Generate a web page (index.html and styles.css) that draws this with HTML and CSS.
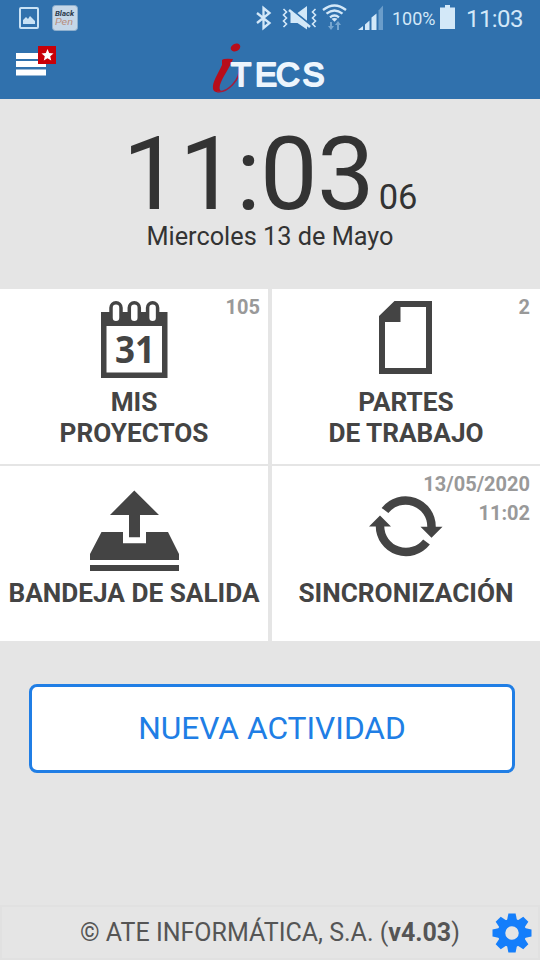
FILE: index.html
```html
<!DOCTYPE html>
<html lang="es">
<head>
<meta charset="utf-8">
<title>iTECS</title>
<link rel="stylesheet" href="styles.css">
</head>
<body>
<header class="header">
  <div class="status">
    <svg class="notices" width="80" height="36" viewBox="0 0 80 36">
      <rect x="20" y="8" width="18" height="20" rx="1" fill="none" stroke="#c9e2f5" stroke-width="2"/>
      <path d="M23 24v-4l3-3 2 2 2-3 2 2 3 3v3z" fill="#c9e2f5"/>
      <rect x="52.500" y="5.500" width="25" height="25" rx="3" fill="#c5d7e8" stroke="#8eafcd"/>
      <text class="pen-top" x="55" y="16" textLength="19" lengthAdjust="spacingAndGlyphs">Black</text>
      <text class="pen-bottom" x="55" y="25" textLength="18" lengthAdjust="spacingAndGlyphs">Pen</text>
    </svg>
    <svg class="signals" width="145" height="36" viewBox="245 0 145 36">
      <path d="M257 13l12.500 10-6 5V8l6 5-12.500 10" fill="none" stroke="#d3e8f8" stroke-width="2.300"/>
      <path d="M290.500 13h7l9.500-7v23.500l-9.500-6.500h-7z" fill="#d3e8f8"/>
      <path d="M289 7.500l21 17" stroke="#3071ad" stroke-width="2.200"/>
      <path d="M289 10l21 17" stroke="#d3e8f8" stroke-width="2.600"/>
      <path d="M283.500 9l3 3-3 3 3 3-3 3 3 3-3 3M315.500 9l-3 3 3 3-3 3 3 3-3 3 3 3" fill="none" stroke="#d3e8f8" stroke-width="1.600"/>
      <path d="M323 10q11.500-9 23 0M326.500 13.700q8-6.500 16 0M330 17.300q4.500-3.500 9 0" fill="none" stroke="#d3e8f8" stroke-width="2.300"/>
      <path d="M331.500 18.800q3-1.500 6 0l-3 3z" fill="#d3e8f8"/>
      <path d="M330 22h2v4h2l-3 4-3-4h2zM337 30h2v-5h2l-3-4-3 4h2z" fill="#76a6d0"/>
      <path d="M358 30l5-4v4zM365 24.500l4.500-4V30H365zM371.500 17.500l5-4V30h-5z" fill="#d3e8f8"/>
      <path d="M378.500 10.500l4.500-5V30h-4.500z" fill="#6b9dca"/>
    </svg>
    <span class="percent">100%</span>
    <svg class="battery" width="15" height="24" viewBox="0 0 15 24"><path d="M5 0h5v2.500h5V24H0V2.500h5z" fill="#d3e8f8"/></svg>
    <span class="status-time">11:03</span>
  </div>
  <div class="brand">
    <svg class="menu" width="40" height="32" viewBox="0 0 40 32">
      <path d="M0 8h30v6H0zM0 16h30v6H0zM0 24.500h30v6H0z" fill="#fff"/>
      <path d="M22 1h18v18H22z" fill="#c90008"/>
      <path d="M31.500 4l1.700 4.100 4.300.3-3.300 2.800 1 4.300-3.700-2.300-3.700 2.300 1-4.300-3.300-2.800 4.300-.3z" fill="#fff"/>
    </svg>
    <svg class="logo" width="120" height="56" viewBox="210 42 120 56">
      <ellipse cx="235.500" cy="47.500" rx="5" ry="3.800" fill="#b70d1b" transform="rotate(-28 235.500 47.500)"/>
      <path d="M222 60q2-2 11-1c-3 8-11 19-13 26-1 4 0 6 2 6-3 2-8 2-9-2-1-7 5-15 9-24z" fill="#b70d1b"/>
      <path d="M217 91.500c10 2 24-12 22-24" fill="none" stroke="#a51c3b" stroke-width="1.500"/>
      <text class="logo-text" x="231 255 276 302.500" y="85.500">TECS</text>
    </svg>
  </div>
</header>
<section class="clock">
  <div class="time"><span class="hours">11:03</span><span class="seconds">06</span></div>
  <div class="date">Miercoles 13 de Mayo</div>
</section>
<main class="tiles">
  <div class="tile">
    <span class="badge">105</span>
    <svg class="icon" width="90" height="100" viewBox="89 289 90 100">
      <path fill-rule="evenodd" d="M101 312h66.500v66H101zM106.500 326v46.500H162V326z" fill="#444"/>
      <g fill="#fff" stroke="#444" stroke-width="3.500"><rect x="111" y="302.700" width="10" height="20" rx="5"/><rect x="129.300" y="302.700" width="10" height="20" rx="5"/><rect x="147.600" y="302.700" width="10" height="20" rx="5"/></g>
      <text class="day" x="115" y="362.500" textLength="40" lengthAdjust="spacingAndGlyphs">31</text>
    </svg>
    <div class="label">MIS<br>PROYECTOS</div>
  </div>
  <div class="tile">
    <span class="badge">2</span>
    <svg class="icon" width="90" height="100" viewBox="361 289 90 100"><path fill-rule="evenodd" d="M394.500 301H432v73h-53v-58zM400.500 307v15H385v46h41v-61z" fill="#444"/></svg>
    <div class="label">PARTES<br>DE TRABAJO</div>
  </div>
  <div class="tile low">
    <svg class="icon" width="90" height="100" viewBox="89 475 90 100"><path d="M134.300 490.500L159 515h-19v22.300h-11V515h-19zM101.500 532H123v11.300h23V532h22l11 22v6H90v-6zM90 565h89v6H90z" fill="#444"/></svg>
    <div class="label">BANDEJA DE SALIDA</div>
  </div>
  <div class="tile low">
    <span class="badge">13/05/2020<br>11:02</span>
    <svg class="icon" width="90" height="100" viewBox="361 475 90 100"><path d="M385 510.500A26 26 0 0 1 431.500 527M426.500 542A26 26 0 0 1 380 526" fill="none" stroke="#444" stroke-width="8.500"/><path d="M420.500 526.700H442.500l-11 11zM369 526.500h22l-11-11z" fill="#444"/></svg>
    <div class="label">SINCRONIZACIÓN</div>
  </div>
</main>
<button class="new">NUEVA ACTIVIDAD</button>
<footer class="footer">
  <span class="copyright">© ATE INFORMÁTICA, S.A. (<b>v4.03</b>)</span>
  <svg class="gear" width="40" height="40" viewBox="-20 -20 40 40">
    <g fill="#147efb"><g id="teeth"><path id="tooth" d="M-3.600-19.500h7.200l1.600 8H-5.200z"/><use href="#tooth" transform="rotate(90)"/><use href="#tooth" transform="rotate(180)"/><use href="#tooth" transform="rotate(270)"/></g><use href="#teeth" transform="rotate(45)"/></g>
    <circle r="10.500" fill="none" stroke="#147efb" stroke-width="7.500"/>
  </svg>
</footer>
</body>
</html>
```
FILE: styles.css
```css
* { box-sizing: border-box; }
body {
  margin: 0;
  width: 540px;
  height: 960px;
  display: flex;
  flex-direction: column;
  overflow: hidden;
  background: #e5e5e5;
  color: #333;
  font-family: Roboto, "Liberation Sans", sans-serif;
}
svg { display: block; flex: none; }
.header { height: 99px; background: #3071ad; }
.status { height: 36px; display: flex; align-items: center; color: #d3e8f8; white-space: nowrap; }
.signals { margin-left: 165px; }
.percent { width: 50px; padding-left: 2px; font-size: 18px; line-height: 36px; padding-top: 2px; }
.battery { margin-top: -2px; }
.status-time { margin-left: 11px; font-size: 24px; letter-spacing: -0.6px; padding-top: 2px; }
.pen-top { font: italic bold 7px Roboto, sans-serif; fill: #28384b; }
.pen-bottom { font: italic 9px Roboto, sans-serif; fill: #b88d7c; }
.brand { display: flex; height: 63px; padding-left: 16px; }
.menu { margin-top: 9px; }
.logo { margin: 6px 0 0 154px; }
.logo-text {
  font: 33px "Liberation Sans", sans-serif;
  fill: #edf5fd;
  stroke: #edf5fd;
  stroke-width: 2px;
  stroke-linejoin: round;
}
.clock { height: 190px; display: flex; flex-direction: column; align-items: center; }
.time { height: 123px; display: flex; align-items: baseline; line-height: 150px; }
.hours { font-size: 102.500px; letter-spacing: -0.8px; }
.seconds { font-size: 34.500px; margin-left: 5px; }
.date { font-size: 25.300px; line-height: 30px; }
.tiles { display: grid; grid-template-columns: 268px 268px; grid-template-rows: 175px 175px; gap: 2px 4px; }
.tile { position: relative; display: flex; flex-direction: column; align-items: center; background: #fff; color: #444; }
.icon { margin-bottom: -2px; }
.low .icon { margin: 9px 0 3px; }
.badge { position: absolute; top: 4px; right: 8px; color: #999; font-size: 20px; font-weight: 700; line-height: 29px; text-align: right; }
.tile:nth-child(even) .badge { right: 10px; }
.label { font-size: 26.200px; font-weight: 700; line-height: 31px; text-align: center; white-space: nowrap; }
.day { font: bold 37px "Open Sans", sans-serif; fill: #444; }
.new {
  margin: 43px 25px 0 29px;
  height: 89px;
  border: 3px solid #207ee5;
  border-radius: 8px;
  background: #fff;
  color: #207ee5;
  font: 31.700px Roboto, sans-serif;
}
.footer { height: 55px; margin-top: auto; border: 2px solid #e1e1e1; display: flex; align-items: center; padding: 0 6px 0 78px; color: #555; }
.copyright { font-size: 25px; white-space: nowrap; }
.gear { margin-left: auto; }
```
